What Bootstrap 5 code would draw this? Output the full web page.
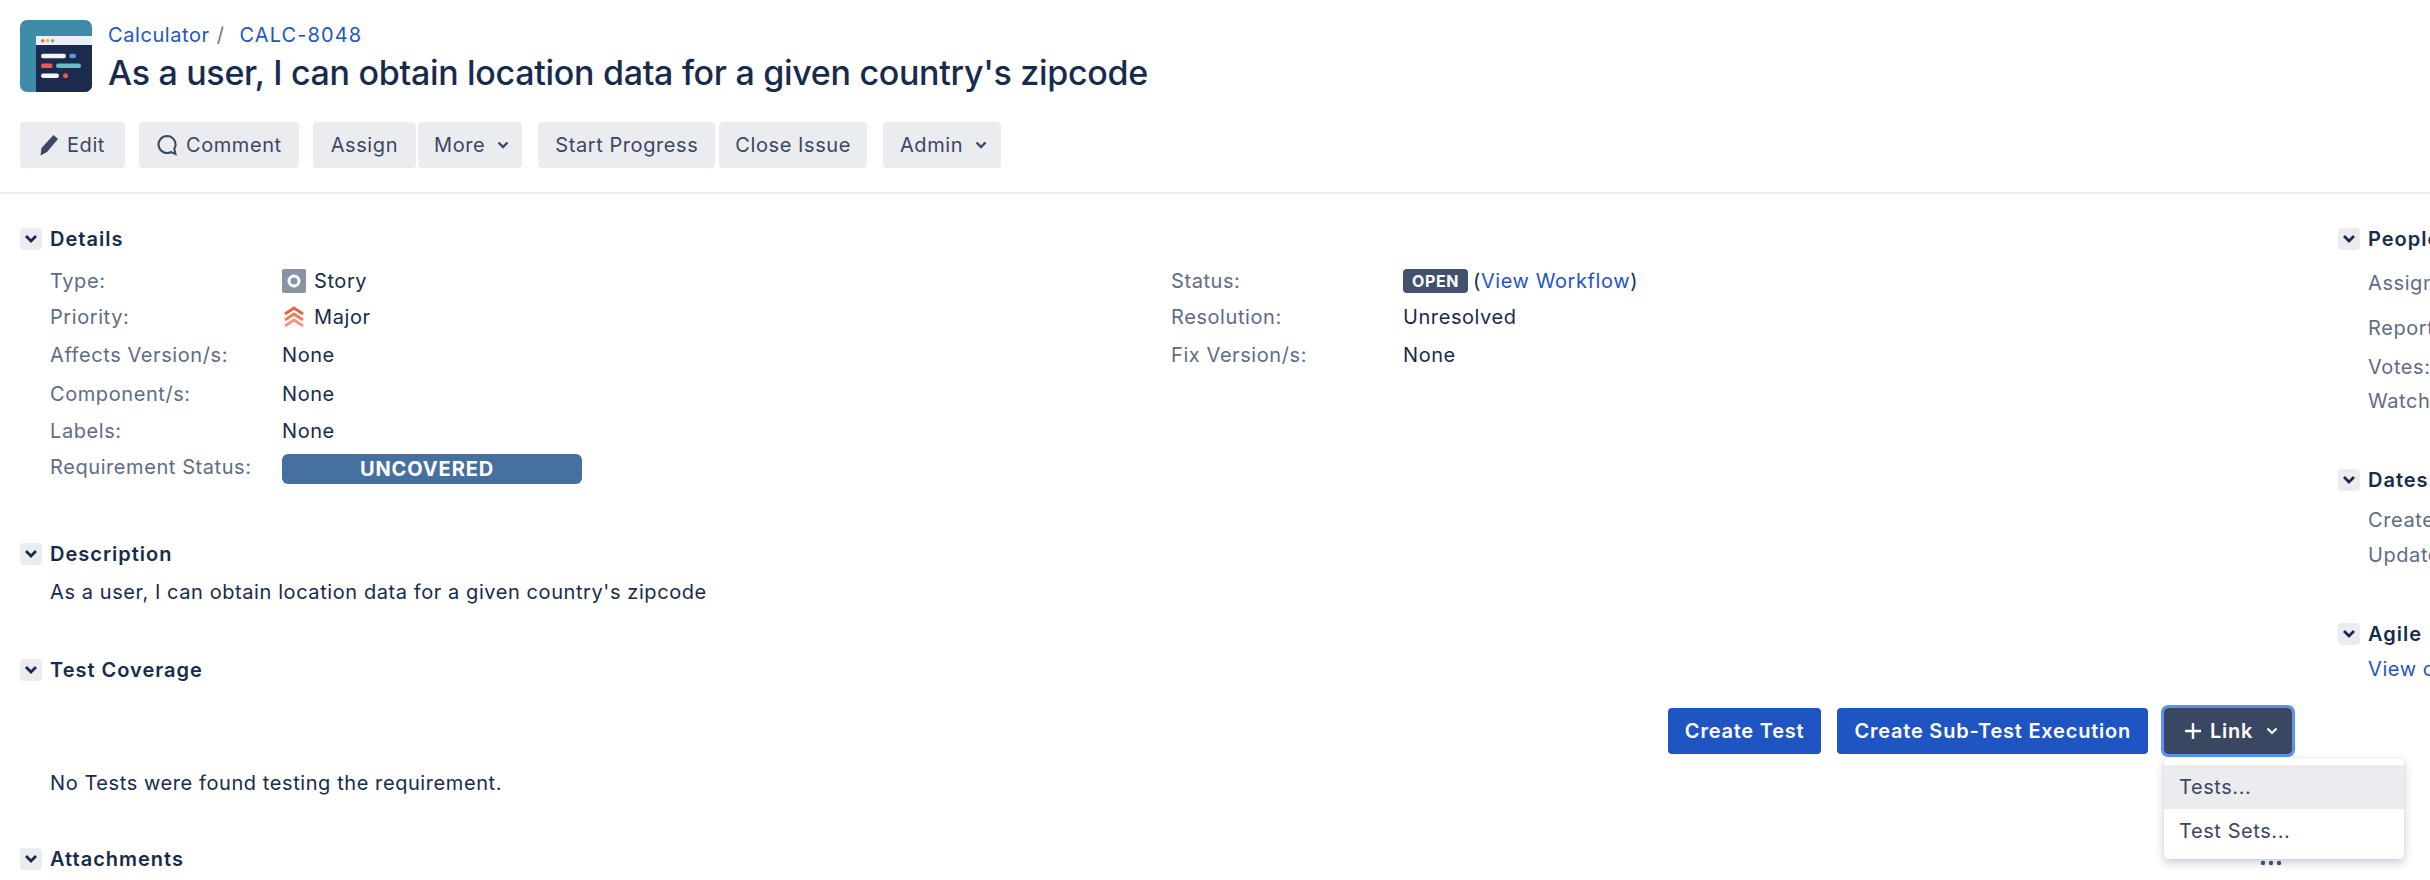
<!DOCTYPE html>
<html lang="en">

<head>
  <meta charset="UTF-8">
  <title>CALC-8048</title>
  <link href="https://cdn.jsdelivr.net/npm/bootstrap@5.3.0/dist/css/bootstrap.min.css" rel="stylesheet">
  <style>
    html, body { height: 880px; overflow: hidden; }
    body { font-family: Inter, "Liberation Sans", sans-serif; font-size: 20px; line-height: 24px; letter-spacing: .58px; color: #172b4d; background: #fff; }
    a { color: #1f55c3; text-decoration: none; }

    .issue-head { padding: 20px 20px 0; height: 194px; border-bottom: 2px solid #ebecf0; }
    .issue-logo { width: 72px; height: 72px; flex: none; }
    .crumbs { height: 32px; padding-top: 3px; }
    .crumbs span { color: #6b778c; margin: 0 15px 0 7px; }
    .issue-key { letter-spacing: 1.1px; }
    .issue-title { font-size: 34px; line-height: 42px; font-weight: 500; margin: 0; color: #172b4d; letter-spacing: -.3px; }

    .tool-bar { margin-top: 28px; gap: 14px; }
    .tool-btn { background: #ebecf0; border: 0; border-radius: 4px; color: #3b4763; font-size: 20px; line-height: 24px; letter-spacing: .58px; height: 46px; padding: 0 17px; display: inline-flex; align-items: center; gap: 8px; }
    .tool-edit { padding: 0 20px 0 19px; }
    .tool-assign { padding: 0 18px; }
    .tool-drop { padding: 0 12px 0 16px; gap: 11px; }
    .tool-close { padding: 0 16px; }
    .btn-group { gap: 2px; }
    .btn-group.pair-wide { gap: 4px; margin-left: 2px; }
    .tool-admin { margin-left: 2px; padding: 0 13px 0 17px; }

    .page-body { padding: 34px 20px 0; gap: 46px; }
    .main-col { width: 2272px; flex: none; }
    .side-col { flex: 1; min-width: 0; white-space: nowrap; }

    .mod-head { display: flex; align-items: center; gap: 8px; height: 22px; font-weight: 600; margin: 0; font-size: 20px; line-height: 22px; letter-spacing: 1px; }
    .mod-toggle { width: 22px; height: 22px; background: #ebecf0; border-radius: 4px; display: flex; align-items: center; justify-content: center; flex: none; }
    .mod-body { padding-left: 30px; }

    .field-grid { display: grid; grid-template-columns: 1121px 1fr; margin-top: 13px; }
    .field-row { display: flex; align-items: center; height: 37.5px; }
    .field-row.tight { height: 36px; }
    .field-row.tall { height: 40px; }
    .field-row.req-row { height: 34px; }
    .field-name { width: 232px; flex: none; color: #5e6c84; }
    .field-val { display: flex; align-items: center; gap: 8px; }
    .side-row { color: #5e6c84; display: flex; align-items: center; height: 24px; }

    .status-open { background: #42526e; color: #fff; font-size: 16px; font-weight: 700; line-height: 24px; height: 24px; padding: 0 9px; border-radius: 4px; letter-spacing: .6px; margin-right: 1px; }
    .req-bar { width: 300px; height: 30px; background: #46709f; color: #fff; border-radius: 6px; text-align: center; font-weight: 700; line-height: 30px; margin-top: 4px; padding-right: 10px; letter-spacing: .9px; }

    .desc-mod { margin-top: 59px; }
    .desc-text { margin-top: 15px; }
    .cover-mod { margin-top: 55px; }
    .cover-actions { gap: 16px; margin-top: 27px; }
    .cover-text { margin-top: 17px; }
    .attach-mod { margin-top: 53px; }
    .act-btn { height: 46px; border-radius: 4px; border: 0; color: #fff; font-size: 20px; font-weight: 600; letter-spacing: .78px; padding: 0 17px; line-height: 24px; }
    .act-blue { background: #1f55c3; }
    .act-dark { background: #3a4763; outline: 3px solid #5b93f0; display: inline-flex; align-items: center; gap: 8px; width: 128px; padding: 0 0 0 20px; }
    .link-menu { display: block; top: 50px; left: 0; width: 240px; min-width: 0; padding: 7px 0 6px; border: 0; border-radius: 4px; margin: 0; box-shadow: 0 4px 10px rgba(9, 30, 66, .22), 0 0 1px rgba(9, 30, 66, .3); z-index: 5; }
    .link-menu .dropdown-item { height: 44px; padding: 0 15px; font-size: 20px; line-height: 44px; color: #3b4763; }
    .link-menu .dropdown-item.is-hover { background: #ebecf0; }
    .more-dots { position: absolute; left: 2260px; top: 859px; width: 24px; }

    .people-list .side-row:nth-child(1) { margin-top: 21px; }
    .people-list .side-row:nth-child(2) { margin-top: 21px; }
    .people-list .side-row:nth-child(3) { margin-top: 15px; }
    .people-list .side-row:nth-child(4) { margin-top: 10px; }
    .dates-mod { margin-top: 56px; }
    .dates-list .side-row:nth-child(1) { margin-top: 17px; }
    .dates-list .side-row:nth-child(2) { margin-top: 11px; }
    .agile-mod { margin-top: 56px; }
    .agile-link { margin-top: 12px; }
  </style>
</head>

<body>

  <header class="issue-head">
    <div class="d-flex gap-3">
      <svg class="issue-logo" viewBox="0 0 72 72">
        <defs><clipPath id="logoClip"><rect width="72" height="72" rx="7"/></clipPath></defs>
        <g clip-path="url(#logoClip)">
          <rect width="72" height="72" fill="#3f8ca8"/>
          <rect x="16" y="16" width="56" height="56" fill="#1b2b4d"/>
          <rect x="16" y="16" width="56" height="9" fill="#ebf0f8"/>
        </g>
        <circle cx="22.700" cy="20.700" r="1.700" fill="#ef5a50"/>
        <circle cx="27.600" cy="20.700" r="1.700" fill="#f2b43c"/>
        <circle cx="32.500" cy="20.700" r="1.700" fill="#5cc46a"/>
        <rect x="21" y="33.700" width="25" height="4.500" rx="2.200" fill="#f2f4f8"/>
        <rect x="49.300" y="33.700" width="6.700" height="4.500" rx="2.200" fill="#5b9bd5"/>
        <rect x="21" y="43.500" width="11.700" height="4.500" rx="2.200" fill="#ef5a50"/>
        <rect x="36" y="43.500" width="25" height="4.500" rx="2.200" fill="#63c2bd"/>
        <rect x="21" y="53.500" width="18" height="4.500" rx="2.200" fill="#f2f4f8"/>
        <rect x="43" y="53.200" width="5" height="5" rx="2.500" fill="#ef5a50"/>
      </svg>
      <div>
        <div class="crumbs"><a href="#">Calculator</a><span>/</span><a class="issue-key" href="#">CALC-8048</a></div>
        <h1 class="issue-title">As a user, I can obtain location data for a given country's zipcode</h1>
      </div>
    </div>

    <div class="tool-bar d-flex">
      <button class="tool-btn tool-edit" type="button">
        <svg width="20" height="22" viewBox="0 0 20 22"><path d="M14.500 1 19 5 8 18l-6.500 3.500L2.500 14Z" fill="#3b4763"/></svg>
        Edit
      </button>
      <button class="tool-btn" type="button">
        <svg width="22" height="22" viewBox="0 0 22 22"><path d="M11 2a8.500 8.500 0 1 0 4 16l4.500 2-1.200-5.200A8.500 8.500 0 0 0 11 2Z" fill="none" stroke="#3b4763" stroke-width="2"/></svg>
        Comment
      </button>
      <div class="btn-group">
        <button class="tool-btn tool-assign" type="button">Assign</button>
        <button class="tool-btn tool-drop" type="button">More
          <svg width="14" height="10" viewBox="0 0 14 10"><path d="M2.500 2.500 7 7l4.500-4.500" fill="none" stroke="#3b4763" stroke-width="2.400"/></svg>
        </button>
      </div>
      <div class="btn-group pair-wide">
        <button class="tool-btn" type="button">Start Progress</button>
        <button class="tool-btn tool-close" type="button">Close Issue</button>
      </div>
      <button class="tool-btn tool-drop tool-admin" type="button">Admin
        <svg width="14" height="10" viewBox="0 0 14 10"><path d="M2.500 2.500 7 7l4.500-4.500" fill="none" stroke="#3b4763" stroke-width="2.400"/></svg>
      </button>
    </div>
  </header>

  <main class="page-body d-flex">
    <div class="main-col">
      <section class="details-mod">
        <h2 class="mod-head"><span class="mod-toggle"><svg width="14" height="10" viewBox="0 0 14 10"><path d="M2 2 7 7l5-5" fill="none" stroke="#172b4d" stroke-width="2.800"/></svg></span>Details</h2>
        <div class="mod-body field-grid">
          <div>
            <div class="field-row tight">
              <div class="field-name">Type:</div>
              <div class="field-val">
                <svg width="24" height="24" viewBox="0 0 24 24"><rect width="24" height="24" rx="2" fill="#8993a4"/><circle cx="12" cy="12" r="5" fill="none" stroke="#fff" stroke-width="3"/></svg>
                Story
              </div>
            </div>
            <div class="field-row tight">
              <div class="field-name">Priority:</div>
              <div class="field-val">
                <svg width="24" height="24" viewBox="0 0 24 24" fill="none" stroke-width="2.800"><path d="M3 9 12 3l9 6" stroke="#e9613a"/><path d="M3 15 12 9l9 6" stroke="#f0795a"/><path d="M3 21l9-6 9 6" stroke="#f5967a"/></svg>
                Major
              </div>
            </div>
            <div class="field-row tall">
              <div class="field-name">Affects Version/s:</div>
              <div class="field-val">None</div>
            </div>
            <div class="field-row">
              <div class="field-name">Component/s:</div>
              <div class="field-val">None</div>
            </div>
            <div class="field-row">
              <div class="field-name">Labels:</div>
              <div class="field-val">None</div>
            </div>
            <div class="field-row req-row">
              <div class="field-name">Requirement Status:</div>
              <div class="req-bar">UNCOVERED</div>
            </div>
          </div>
          <div>
            <div class="field-row tight">
              <div class="field-name">Status:</div>
              <div class="field-val gap-1"><span class="status-open">OPEN</span><span>(<a href="#">View Workflow</a>)</span></div>
            </div>
            <div class="field-row tight">
              <div class="field-name">Resolution:</div>
              <div class="field-val">Unresolved</div>
            </div>
            <div class="field-row tall">
              <div class="field-name">Fix Version/s:</div>
              <div class="field-val">None</div>
            </div>
          </div>
        </div>
      </section>

      <section class="desc-mod">
        <h2 class="mod-head"><span class="mod-toggle"><svg width="14" height="10" viewBox="0 0 14 10"><path d="M2 2 7 7l5-5" fill="none" stroke="#172b4d" stroke-width="2.800"/></svg></span>Description</h2>
        <div class="mod-body desc-text">As a user, I can obtain location data for a given country's zipcode</div>
      </section>

      <section class="cover-mod">
        <h2 class="mod-head"><span class="mod-toggle"><svg width="14" height="10" viewBox="0 0 14 10"><path d="M2 2 7 7l5-5" fill="none" stroke="#172b4d" stroke-width="2.800"/></svg></span>Test Coverage</h2>
        <div class="cover-actions d-flex justify-content-end">
          <button class="act-btn act-blue" type="button">Create Test</button>
          <button class="act-btn act-blue" type="button">Create Sub-Test Execution</button>
          <div class="dropdown position-relative">
            <button class="act-btn act-dark" type="button">
              <svg width="18" height="18" viewBox="0 0 18 18"><path d="M9 1v16M1 9h16" stroke="#fff" stroke-width="2.400"/></svg>
              Link
              <svg class="ms-1" width="14" height="10" viewBox="0 0 14 10"><path d="M2.500 2.500 7 7l4.500-4.500" fill="none" stroke="#fff" stroke-width="2.200"/></svg>
            </button>
            <div class="dropdown-menu link-menu">
              <a class="dropdown-item is-hover" href="#">Tests...</a>
              <a class="dropdown-item" href="#">Test Sets...</a>
            </div>
          </div>
        </div>
        <div class="mod-body cover-text">No Tests were found testing the requirement.</div>
      </section>

      <section class="attach-mod">
        <h2 class="mod-head"><span class="mod-toggle"><svg width="14" height="10" viewBox="0 0 14 10"><path d="M2 2 7 7l5-5" fill="none" stroke="#172b4d" stroke-width="2.800"/></svg></span>Attachments</h2>
      </section>
    </div>

    <aside class="side-col">
      <section>
        <h2 class="mod-head"><span class="mod-toggle"><svg width="14" height="10" viewBox="0 0 14 10"><path d="M2 2 7 7l5-5" fill="none" stroke="#172b4d" stroke-width="2.800"/></svg></span>People</h2>
        <div class="mod-body people-list">
          <div class="side-row">Assignee:</div>
          <div class="side-row">Reporter:</div>
          <div class="side-row">Votes:</div>
          <div class="side-row">Watchers:</div>
        </div>
      </section>
      <section class="dates-mod">
        <h2 class="mod-head"><span class="mod-toggle"><svg width="14" height="10" viewBox="0 0 14 10"><path d="M2 2 7 7l5-5" fill="none" stroke="#172b4d" stroke-width="2.800"/></svg></span>Dates</h2>
        <div class="mod-body dates-list">
          <div class="side-row">Created:</div>
          <div class="side-row">Updated:</div>
        </div>
      </section>
      <section class="agile-mod">
        <h2 class="mod-head"><span class="mod-toggle"><svg width="14" height="10" viewBox="0 0 14 10"><path d="M2 2 7 7l5-5" fill="none" stroke="#172b4d" stroke-width="2.800"/></svg></span>Agile</h2>
        <div class="mod-body agile-link"><a href="#">View on Board</a></div>
      </section>
    </aside>
  </main>

  <svg class="more-dots" height="8" viewBox="0 0 24 8"><circle cx="3" cy="4" r="2.200" fill="#42526e"/><circle cx="11" cy="4" r="2.200" fill="#42526e"/><circle cx="19" cy="4" r="2.200" fill="#42526e"/></svg>

</body>

</html>
